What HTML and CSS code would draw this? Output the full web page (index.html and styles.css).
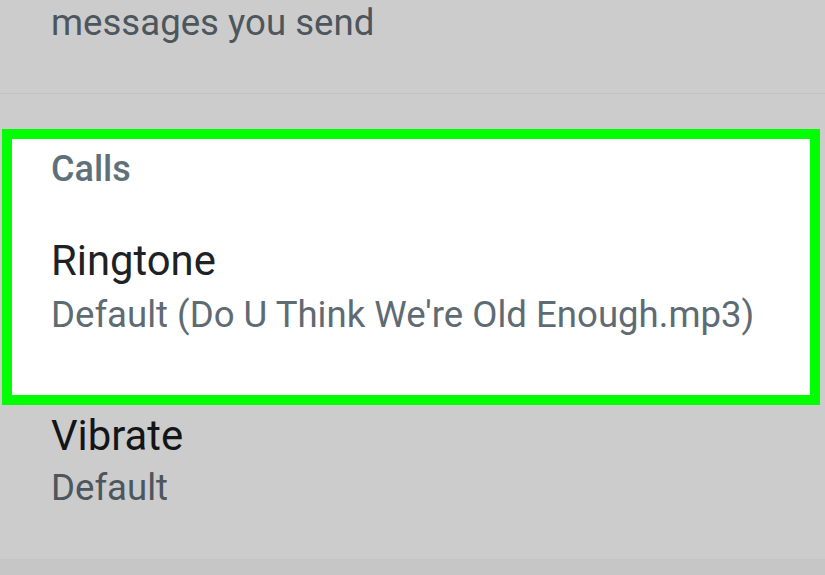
FILE: index.html
```html
<!DOCTYPE html>
<html>
<head>
<meta charset="utf-8">
<link rel="stylesheet" href="styles.css">
</head>
<body>
<div class="screen">
  <div class="pref pref-top">
    <div class="summary dim">messages you send</div>
  </div>
  <div class="highlight">
    <div class="category">Calls</div>
    <div class="item">
      <div class="title">Ringtone</div>
      <div class="summary">Default (Do U Think We're Old Enough.mp3)</div>
    </div>
  </div>
  <div class="pref pref-vibrate">
    <div class="title dim">Vibrate</div>
    <div class="summary dim">Default</div>
  </div>
  <div class="bottom-band"></div>
</div>
</body>
</html>
```

FILE: styles.css
```css
html, body {
  margin: 0;
  padding: 0;
}
body {
  background: #cccccc;
  font-family: Roboto, "Noto Sans", sans-serif;
  width: 825px;
  height: 575px;
  overflow: hidden;
}
.screen {
  display: flex;
  flex-direction: column;
  height: 575px;
}
.pref {
  padding-left: 51px;
}
.pref-top {
  height: 93px;
  border-bottom: 1px solid #c2c2c2;
}
.pref-top .summary {
  margin-top: 1px;
}
.summary {
  font-size: 36.6px;
  line-height: 44px;
  color: #5f6b73;
}
.summary.dim {
  color: #4c565c;
}
.title {
  font-size: 41.8px;
  line-height: 50px;
  color: #202124;
}
.title.dim {
  color: #141517;
}
.highlight {
  margin: 35px 5px 0 2px;
  border: 10px solid #00ff00;
  background: #ffffff;
  height: 256px;
  box-sizing: content-box;
  padding-left: 39px;
}
.category {
  font-size: 36px;
  font-weight: 500;
  line-height: 44px;
  color: #5f707a;
  margin-top: 8px;
}
.item {
  margin-top: 45px;
  display: flex;
  flex-direction: column;
  gap: 7px;
}
.pref-vibrate {
  margin-top: 6px;
  display: flex;
  flex-direction: column;
  gap: 5px;
}
.bottom-band {
  margin-top: auto;
  height: 16px;
  background: #c6c6c7;
}
```
